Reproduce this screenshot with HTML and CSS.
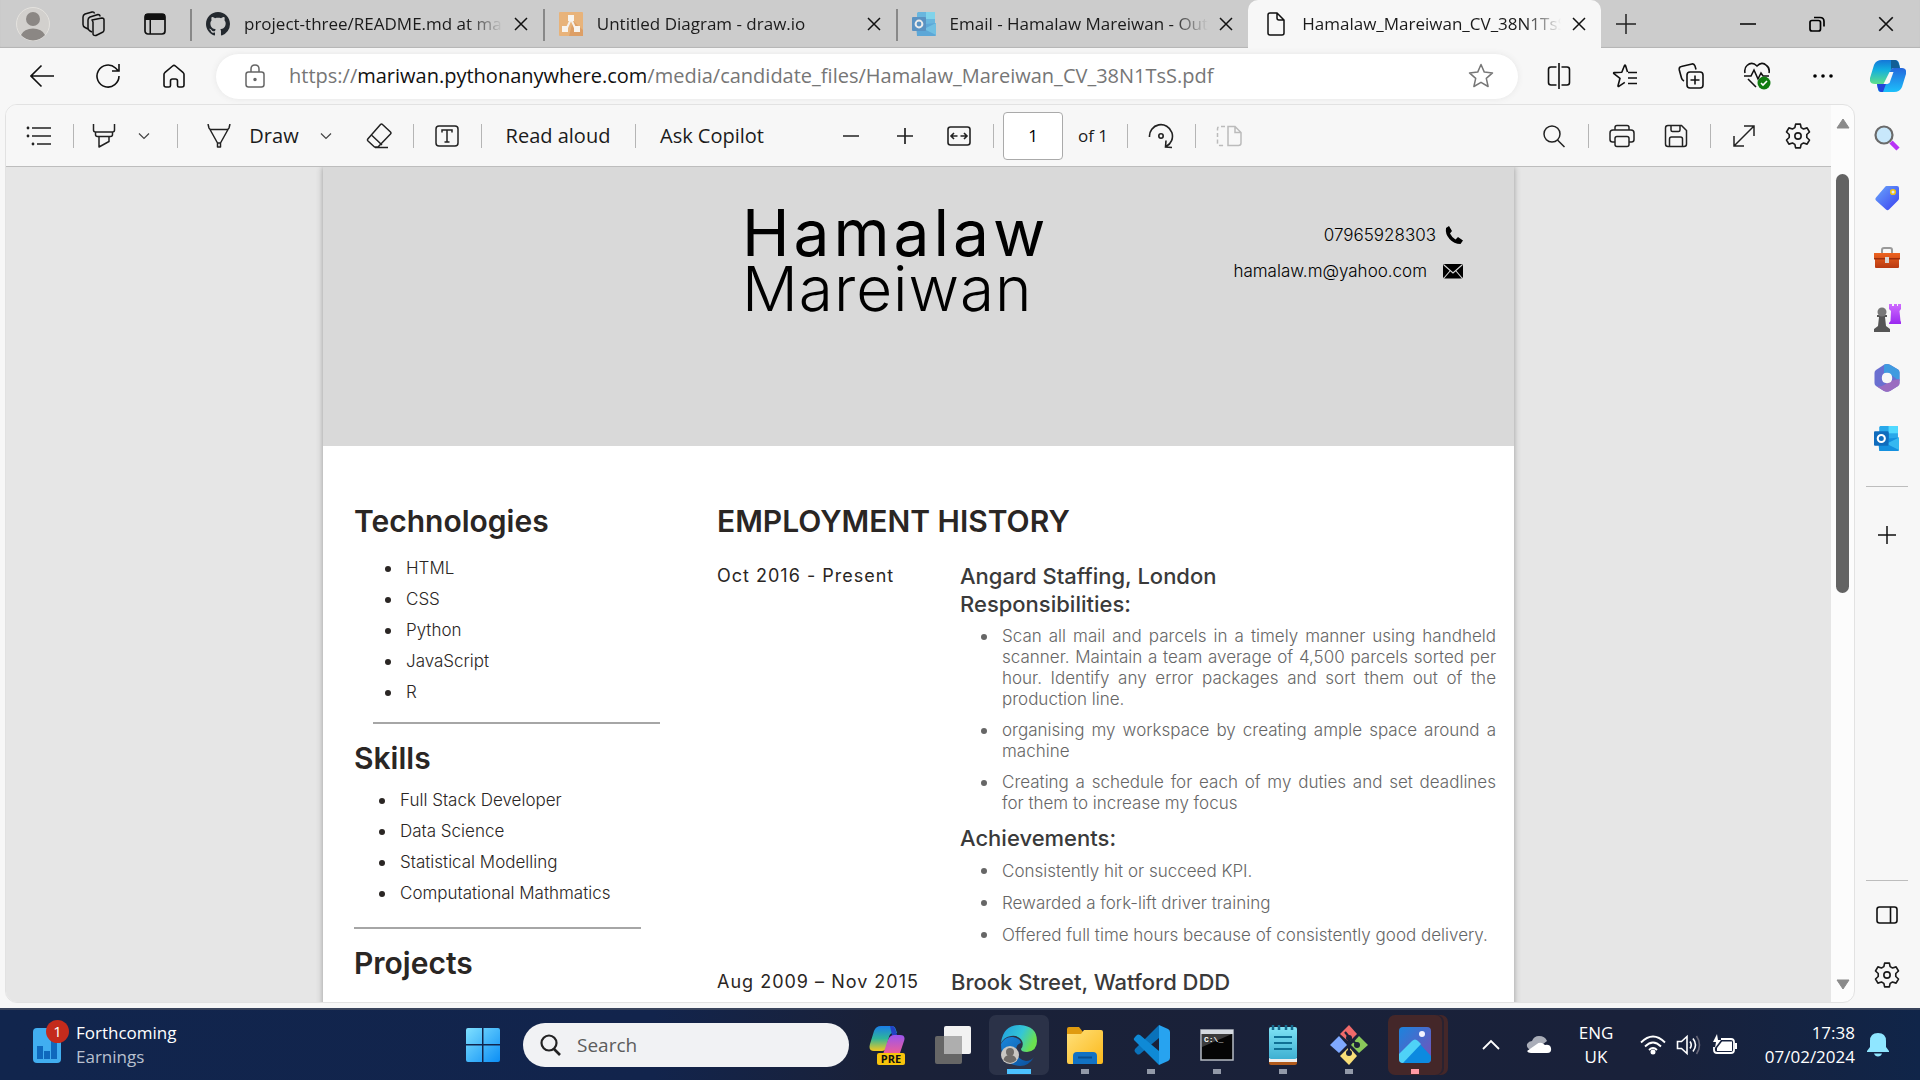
FILE: index.html
```html
<!DOCTYPE html>
<html lang="en">
<head>
<meta charset="utf-8">
<title>Hamalaw_Mareiwan_CV_38N1TsS.pdf</title>
<link rel="stylesheet" href="styles.css">
</head>
<body>
<svg class="defs" aria-hidden="true">
  <defs>
    <linearGradient id="blue" x1="0" y1="0" x2="1" y2="1"><stop offset="0" stop-color="#7fe0ff"/><stop offset="1" stop-color="#0b8ef5"/></linearGradient>
    <linearGradient id="tag" x1="0" y1="0" x2="1" y2="1"><stop offset="0" stop-color="#6aa8fb"/><stop offset="1" stop-color="#3a3ff0"/></linearGradient>
    <linearGradient id="copA" x1="0" y1="0" x2="0" y2="1"><stop offset="0" stop-color="#1576d8"/><stop offset=".4" stop-color="#12aee0"/><stop offset="1" stop-color="#5fe08a"/></linearGradient>
    <linearGradient id="copB" x1="0" y1="0" x2="0" y2="1"><stop offset="0" stop-color="#2567dc"/><stop offset="1" stop-color="#1cc0fb"/></linearGradient>
    <linearGradient id="preA" x1="0" y1="0" x2="0" y2="1"><stop offset="0" stop-color="#1a7de8"/><stop offset=".5" stop-color="#2fb59b"/><stop offset="1" stop-color="#f5c81e"/></linearGradient>
    <linearGradient id="preB" x1="0" y1="0" x2="0" y2="1"><stop offset="0" stop-color="#9a55ee"/><stop offset="1" stop-color="#ff5f86"/></linearGradient>
    <linearGradient id="edgeTop" x1="0" y1="0" x2="1" y2=".4"><stop offset="0" stop-color="#1e9de0"/><stop offset=".6" stop-color="#35c6d6"/><stop offset="1" stop-color="#6be04f"/></linearGradient>
    <linearGradient id="edgeLow" x1="0" y1="0" x2="1" y2="1"><stop offset="0" stop-color="#1a87dc"/><stop offset="1" stop-color="#0b4f9c"/></linearGradient>
    <linearGradient id="folder" x1="0" y1="0" x2="1" y2="1"><stop offset="0" stop-color="#ffe07a"/><stop offset="1" stop-color="#fbb91b"/></linearGradient>
    <linearGradient id="photo" x1="0" y1="0" x2="1" y2="1"><stop offset="0" stop-color="#1b84dd"/><stop offset="1" stop-color="#7a4fb8"/></linearGradient>
    <linearGradient id="rook" x1="0" y1="0" x2="0" y2="1"><stop offset="0" stop-color="#cf6bff"/><stop offset="1" stop-color="#9a28f0"/></linearGradient>
    <linearGradient id="box" x1="0" y1="0" x2="0" y2="1"><stop offset="0" stop-color="#ee6420"/><stop offset="1" stop-color="#b83a12"/></linearGradient>
    <linearGradient id="note" x1="0" y1="0" x2="0" y2="1"><stop offset="0" stop-color="#7fe3f5"/><stop offset="1" stop-color="#3fb0d2"/></linearGradient>
    <symbol id="x" viewBox="0 0 16 16"><path d="M2 2l12 12M14 2L2 14" fill="none" stroke="#111" stroke-width="1.5"/></symbol>
    <symbol id="chev" viewBox="0 0 12 12"><path d="M1 3.5l5 5 5-5" fill="none" stroke="#444" stroke-width="1.2"/></symbol>
    <symbol id="gear" viewBox="0 0 24 24"><g fill="none" stroke="#1b1b1b" stroke-width="1.5" stroke-linejoin="round"><path d="M9.800 1h4.400l.7 3.300 2.200 1.200 3.300-1 2.200 3.800-2.500 2.300v2.800l2.500 2.300-2.200 3.800-3.300-1-2.200 1.200-.7 3.300H9.800l-.7-3.300-2.200-1.200-3.300 1-2.200-3.800 2.500-2.300v-2.800L1.400 8.300l2.200-3.800 3.300 1 2.200-1.200z"/><circle cx="12" cy="12" r="2.900"/></g></symbol>
    <symbol id="outlook" viewBox="0 0 24 24"><path d="M6 0h16a1 1 0 0 1 1 1v13H5V1z" fill="#28a8ea"/><path d="M14 0h9v7h-9z" fill="#50d9ff"/><path d="M5 7h9v7H5z" fill="#0364b8"/><path d="M4 13l20-2v12a1 1 0 0 1-1 1H5z" fill="#1490df"/><path d="M24 11v12l-12-6z" fill="#35b8f1"/><rect x="0" y="5" width="14" height="14" rx="1" fill="#0f6cbd"/><circle cx="7" cy="12" r="3.400" fill="none" stroke="#fff" stroke-width="2"/></symbol>
  </defs>
</svg>

<header class="tabbar">
  <button class="tb-icon" aria-label="Profile"><svg width="34" height="34" viewBox="0 0 34 34"><circle cx="17" cy="17" r="16.500" fill="#d2d0cd" stroke="#e4e2de"/><circle cx="17" cy="12" r="7" fill="#8b8784"/><path d="M5 28a12.500 9 0 0 1 24 0 16 16 0 0 1-24 0z" fill="#8b8784"/></svg></button>
  <button class="tb-icon" aria-label="Workspaces"><svg width="26" height="26" viewBox="0 0 26 26" fill="none" stroke="#111" stroke-width="1.500" stroke-linejoin="round"><path d="M12 9l10-2q2 0 2 2v10q0 1-1 2l-7 3.500q-3 .5-3-2V11z"/><path d="M12 21l-2-1q-2-1-2-3V9q0-2 2-3l8-2.500q2 0 2 2"/><path d="M8 18l-3-1.500q-2-1-2-3V6q0-2 2-3l7-2q2-.5 2.500 1.500"/></svg></button>
  <button class="tb-icon" aria-label="Tab actions"><svg width="22" height="22" viewBox="0 0 22 22"><rect x="1" y="1" width="20" height="20" rx="3" fill="none" stroke="#111" stroke-width="1.700"/><path d="M1 1h20v6H1zM5.500 7h1.500v14H5.500z" fill="#111"/></svg></button>
  <nav class="tabs" aria-label="Open tabs">
    <div class="tab"><svg width="24" height="24" viewBox="0 0 16 16"><path fill="#24292f" d="M8 0C3.580 0 0 3.580 0 8c0 3.540 2.290 6.530 5.470 7.590.4.070.55-.17.55-.38 0-.19-.01-.82-.01-1.490-2.010.37-2.530-.49-2.690-.94-.09-.23-.48-.94-.82-1.130-.28-.15-.68-.52-.01-.53.63-.01 1.080.58 1.230.82.72 1.210 1.870.87 2.330.66.070-.52.28-.87.51-1.070-1.780-.2-3.640-.89-3.640-3.950 0-.87.31-1.590.82-2.150-.08-.2-.36-1.020.08-2.120 0 0 .67-.21 2.200.82.64-.18 1.320-.27 2-.27s1.360.09 2 .27c1.530-1.040 2.200-.82 2.200-.82.44 1.100.16 1.920.08 2.120.51.56.82 1.270.82 2.150 0 3.070-1.870 3.750-3.650 3.950.29.25.54.73.54 1.480 0 1.070-.01 1.930-.01 2.200 0 .21.15.46.55.38A8.010 8.010 0 0 0 16 8c0-4.420-3.580-8-8-8z"/></svg><a class="title" href="#">project-three/README.md at main</a><button class="close" aria-label="Close tab"><svg width="16" height="16"><use href="#x"/></svg></button></div>
    <div class="tab"><svg width="24" height="24" viewBox="0 0 24 24"><rect width="24" height="24" rx="1" fill="#e8b37a"/><path d="M14 9l10 9v6H10z" fill="#dd9f66"/><path d="M12 7L7 18M12 7l5 11" stroke="#f5f0ea" stroke-width="2"/><path d="M9 3h6v6H9zM3 14h6v6H3zM15 14h6v6h-6z" fill="#f8f4ee"/></svg><a class="title" href="#">Untitled Diagram - draw.io</a><button class="close" aria-label="Close tab"><svg width="16" height="16"><use href="#x"/></svg></button></div>
    <div class="tab"><svg class="faded" width="24" height="24"><use href="#outlook"/></svg><a class="title" href="#">Email - Hamalaw Mareiwan - Outlook</a><button class="close" aria-label="Close tab"><svg width="16" height="16"><use href="#x"/></svg></button></div>
    <div class="tab active"><svg width="24" height="24" viewBox="0 0 24 24" fill="none" stroke="#111" stroke-width="1.500"><path d="M6 1h7l7 7v13q0 2-2 2H6q-2 0-2-2V3q0-2 2-2zM13 1v5q0 2 2 2h5"/></svg><a class="title" href="#">Hamalaw_Mareiwan_CV_38N1TsS.pdf</a><button class="close" aria-label="Close tab"><svg width="16" height="16"><use href="#x"/></svg></button></div>
  </nav>
  <button class="newtab" aria-label="New tab"><svg width="22" height="22" viewBox="0 0 22 22"><path d="M11 1v20M1 11h20" stroke="#222" stroke-width="1.500"/></svg></button>
  <div class="winctl">
    <button aria-label="Minimize"><svg width="16" height="16" viewBox="0 0 16 16"><path d="M0 8h16" stroke="#000" stroke-width="1.500"/></svg></button>
    <button aria-label="Restore"><svg width="16" height="16" viewBox="0 0 16 16" fill="none" stroke="#000" stroke-width="1.700"><rect x="1" y="4.500" width="10.500" height="10.500" rx="2"/><path d="M5 1.500h6q4 0 4 4v5"/></svg></button>
    <button aria-label="Close"><svg width="18" height="18"><use href="#x"/></svg></button>
  </div>
</header>

<div class="navbar">
  <button class="nav" aria-label="Back"><svg width="24" height="24" viewBox="0 0 24 24" fill="none" stroke="#111" stroke-width="1.600"><path d="M24 12H1M11.500 1.500L1 12l10.500 10.500"/></svg></button>
  <button class="nav" aria-label="Refresh"><svg width="26" height="26" viewBox="0 0 26 26" fill="none" stroke="#111" stroke-width="1.600"><path d="M24 13A11 11 0 1 1 20.500 5L23 7.500M24 1v7h-7"/></svg></button>
  <button class="nav" aria-label="Home"><svg width="24" height="24" viewBox="0 0 24 24" fill="none" stroke="#111" stroke-width="1.600" stroke-linejoin="round"><path d="M2 10.500q0-1 .8-1.800L10.600 2q1.400-1.200 2.800 0l7.800 6.700q.8.800.8 1.800V21q0 2-2 2h-3q-1.500 0-1.500-1.500V17q0-2-2-2h-3q-2 0-2 2v4.500Q8.500 23 7 23H4q-2 0-2-2z"/></svg></button>
  <div class="address">
    <svg width="22" height="24" viewBox="0 0 22 24" fill="none" stroke="#666" stroke-width="1.500"><rect x="2" y="8" width="18" height="15" rx="2.500"/><path d="M7 8V5q0-4 4-4t4 4v3"/><circle cx="11" cy="15.500" r="1" fill="#666"/></svg>
    <div class="url" role="textbox" contenteditable="true" aria-label="Address">https://<b>mariwan.pythonanywhere.com</b>/media/candidate_files/Hamalaw_Mareiwan_CV_38N1TsS.pdf</div>
    <button class="star" aria-label="Add to favourites"><svg width="26" height="26" viewBox="0 0 26 26" fill="none" stroke="#777" stroke-width="1.500" stroke-linejoin="round"><path d="M13 1.500l3.300 7.600 8.200.8-6.200 5.500 1.800 8.100-7.100-4.200-7.100 4.200 1.800-8.100L1.500 9.900l8.200-.8z"/></svg></button>
  </div>
  <button class="nav" aria-label="Split screen"><svg width="24" height="26" viewBox="0 0 24 26" fill="none" stroke="#111" stroke-width="1.600"><path d="M9.500 4H4Q1.500 4 1.500 6.500v13Q1.500 22 4 22h5.500M14.500 4H20q2.500 0 2.500 2.500v13Q22.500 22 20 22h-5.500M12 0v26"/></svg></button>
  <button class="nav" aria-label="Favourites"><svg width="26" height="26" viewBox="0 0 26 26" fill="none" stroke="#111" stroke-width="1.600" stroke-linejoin="round"><path d="M15.500 9l-2-6.500q-.5-1-1 0L9.800 9.200l-7.600.4q-1 .2-.3 1L8 15.300l-2 7.500q-.1 1 .8.600l6-4M16 9.500h9M16 15h9M16 20.500h9"/></svg></button>
  <button class="nav" aria-label="Collections"><svg width="26" height="26" viewBox="0 0 26 26" fill="none" stroke="#111" stroke-width="1.600"><rect x="9" y="9" width="16" height="16" rx="3"/><path d="M17 12.500v9M12.500 17h9M6 18q-2-1-2.500-3L1.300 7q-.5-3 2-3.500L14 1q2-.5 3 2l1 3.500"/></svg></button>
  <button class="nav" aria-label="Browser essentials"><svg width="28" height="28" viewBox="0 0 28 28" fill="none" stroke="#111" stroke-width="1.600"><path d="M2 11Q1 6 4 3.500 9-1 14 4q5-5 9.500-.5Q27 6 26 11M1 14h7l3-6 4 9 3-6 2 3h6M5 17l8 8"/><circle cx="21" cy="21" r="6.500" fill="#107c10" stroke="none"/><path d="M18 21l2 2 4-4" stroke="#fff"/></svg></button>
  <button class="nav" aria-label="More"><svg width="20" height="6" viewBox="0 0 20 6"><circle cx="2" cy="3" r="1.800"/><circle cx="10" cy="3" r="1.800"/><circle cx="18" cy="3" r="1.800"/></svg></button>
  <button class="nav copilot" aria-label="Copilot"><svg width="36" height="32" viewBox="0 0 36 32"><path d="M12 0h13q3 0 4 3l1 5h-6q-3 0-4 4l-3 9q-1 3-4 3H5q-6 0-5-6L4 5q2-5 8-5z" fill="url(#copA)"/><path d="M24 32H11q-3 0-3-3l-1-5h6q3 0 4-4l3-9q1-3 4-3h8q5 0 4 6l-4 13q-2 5-8 5z" fill="url(#copB)"/><path d="M7 24h6q3 0 4-3l-4 11h-2q-3 0-4-8z" fill="#2345d8"/><path d="M21 0h4q3 0 5 8h-6q-2 0-3 1z" fill="#125f96"/><path d="M19.500 12h4l-4 11-2 1h-4z" fill="#f7f7f7"/></svg></button>
</div>

<div class="workspace">
  <main class="viewer">
    <div class="document">
      <div class="pdfbar">
        <div class="group">
          <button class="tool wide" aria-label="Contents"><svg width="26" height="22" viewBox="0 0 26 22"><path d="M6 3h19M6 11h19M11 19h14" stroke="#222" stroke-width="1.600"/><g fill="#222"><circle cx="2" cy="3" r="1.400"/><circle cx="2" cy="11" r="1.400"/><circle cx="7" cy="19" r="1.400"/></g></svg></button>
          <span class="sep thin"></span>
          <button class="tool mid" aria-label="Highlight"><svg width="24" height="24" viewBox="0 0 24 24" fill="none" stroke="#222" stroke-width="1.500" stroke-linejoin="round"><path d="M1.500 0v6q0 2 2 2h17q2 0 2-2V0M3.500 8v2.500q0 2 2 2h13q2 0 2-2V8M7 12.500V23l10-5.500v-5"/></svg></button>
          <button class="tool small" aria-label="Highlight options"><svg width="12" height="12"><use href="#chev"/></svg></button>
          <span class="sep"></span>
          <button class="tool text"><svg width="24" height="24" viewBox="0 0 24 24" fill="none" stroke="#222" stroke-width="1.500" stroke-linejoin="round"><path d="M1 0l1 4q.5 1.500 2 1.500h16q1.500 0 2-1.500l1-4M3 5.500L10.500 19v4h3v-4L21 5.500M10.500 19h3"/></svg>Draw</button>
          <button class="tool small spaced" aria-label="Draw options"><svg width="12" height="12"><use href="#chev"/></svg></button>
          <button class="tool wide" aria-label="Erase"><svg width="26" height="26" viewBox="0 0 26 26" fill="none" stroke="#222" stroke-width="1.500" stroke-linejoin="round"><path d="M16.500 1.500l8 7.500q1 1 0 2L12 24H8.500l-6.500-6q-1-1 0-2.200L14.500 1.500q1-1 2 0zM6 12.500l10 9.500M9 24.500h13"/></svg></button>
          <span class="sep thin"></span>
          <button class="tool wide" aria-label="Add text"><svg width="24" height="22" viewBox="0 0 24 22" fill="none" stroke="#222" stroke-width="1.500"><rect x="1" y="1" width="22" height="20" rx="3"/><path d="M7 7.500V5h10v2.500M12 5v12M9.500 17h5"/></svg></button>
          <span class="sep thin"></span>
          <button class="tool label">Read aloud</button>
          <span class="sep thin"></span>
          <button class="tool label">Ask Copilot</button>
        </div>
        <div class="group center">
          <button class="tool" aria-label="Zoom out"><svg width="18" height="18" viewBox="0 0 18 18"><path d="M1 9h16" stroke="#222" stroke-width="1.700"/></svg></button>
          <button class="tool" aria-label="Zoom in"><svg width="18" height="18" viewBox="0 0 18 18"><path d="M1 9h16M9 1v16" stroke="#222" stroke-width="1.700"/></svg></button>
          <button class="tool" aria-label="Fit to width"><svg width="24" height="20" viewBox="0 0 24 20" fill="none" stroke="#222" stroke-width="1.600"><rect x="1" y="1" width="22" height="18" rx="2.500"/><path d="M10.500 10H4M7 7l-3 3 3 3M13.500 10H20M17 7l3 3-3 3"/></svg></button>
          <span class="sep tight"></span>
          <input class="pageno" type="text" value="1" aria-label="Page number">
          <span class="of">of 1</span>
          <span class="sep tight"></span>
          <button class="tool" aria-label="Rotate"><svg width="26" height="26" viewBox="0 0 26 26" fill="none" stroke="#222" stroke-width="1.600"><path d="M1.500 14A11.500 11.500 0 1 1 18 23.500M24 24.500l-6.500-.5.500-6.500"/><circle cx="13" cy="13" r="2.200"/></svg></button>
          <span class="sep tight"></span>
          <button class="tool" aria-label="Page view" disabled><svg width="26" height="22" viewBox="0 0 26 22" fill="none" stroke="#bbb" stroke-width="1.500"><path d="M9 1.500H4Q1.500 1.500 1.500 4v14q0 2.500 2.500 2.500h5" stroke-dasharray="4 2.500"/><path d="M12 1.500h7l6 6V18q0 2.500-2.500 2.500H12zM19 1.500v6h6"/></svg></button>
        </div>
        <div class="group end">
          <button class="tool" aria-label="Find"><svg width="22" height="24" viewBox="0 0 22 24" fill="none" stroke="#222" stroke-width="1.500"><circle cx="9" cy="10" r="8"/><path d="M14.500 16l7 7"/></svg></button>
          <span class="sep tight"></span>
          <button class="tool" aria-label="Print"><svg width="26" height="24" viewBox="0 0 26 24" fill="none" stroke="#222" stroke-width="1.500"><path d="M6 6V3.500Q6 1.500 8 1.500h10q2 0 2 2V6M6 18H3.500Q1 18 1 15.500V9q0-3 3-3h18q3 0 3 3v6.500q0 2.500-2.500 2.500H20"/><rect x="6" y="12.500" width="14" height="10" rx="2"/></svg></button>
          <button class="tool" aria-label="Save"><svg width="24" height="24" viewBox="0 0 24 24" fill="none" stroke="#222" stroke-width="1.500"><path d="M4 1.500h13.500l5 5V20q0 2.500-2.500 2.500H4q-2.500 0-2.500-2.500V4Q1.500 1.500 4 1.500zM7 1.500V6q0 1.500 1.500 1.500h6Q16 7.500 16 6V1.500M5.500 22.500V15q0-2 2-2h9q2 0 2 2v7.500"/></svg></button>
          <span class="sep tight"></span>
          <button class="tool" aria-label="Full screen"><svg width="24" height="24" viewBox="0 0 24 24" fill="none" stroke="#222" stroke-width="1.500"><path d="M2 22L22 2M12 2h10v10M2 12v10h10"/></svg></button>
          <button class="tool" aria-label="Settings"><svg width="26" height="26"><use href="#gear"/></svg></button>
        </div>
      </div>
      <div class="canvas">
        <article class="page">
          <header class="cv-head">
            <h1>Hamalaw <span>Mareiwan</span></h1>
            <address>
              <p>07965928303 <svg width="18" height="18" viewBox="0 0 18 18"><path d="M1 2L4 0l3 5-2 2.500q2 4 5.500 6L13 11l5 3.500L15.500 18Q9 18 4.500 13T1 2z"/></svg></p>
              <p class="mail">hamalaw.m@yahoo.com <svg width="20" height="16" viewBox="0 0 20 16"><rect y="1" width="20" height="14.500" rx="2"/><path d="M1 2l9 8 9-8M1 15l6-7M19 15l-6-7" fill="none" stroke="#d9d9d9" stroke-width="1.100"/></svg></p>
            </address>
          </header>
          <div class="cv-body">
            <aside>
              <h2>Technologies</h2>
              <ul class="first">
                <li>HTML</li><li>CSS</li><li>Python</li><li>JavaScript</li><li>R</li>
              </ul>
              <hr class="inset">
              <h2>Skills</h2>
              <ul>
                <li>Full Stack Developer</li><li>Data Science</li><li>Statistical Modelling</li><li>Computational Mathmatics</li>
              </ul>
              <hr>
              <h2>Projects</h2>
              <ul class="projects"><li>Travel Hills</li></ul>
            </aside>
            <section>
              <h2>EMPLOYMENT HISTORY</h2>
              <div class="job">
                <p class="date">Oct 2016 - Present</p>
                <div>
                  <h3>Angard Staffing, London<br>Responsibilities:</h3>
                  <ul class="duties">
                    <li>Scan all mail and parcels in a timely manner using handheld scanner. Maintain a team average of 4,500 parcels sorted per hour. Identify any error packages and sort them out of the production line.</li>
                    <li>organising my workspace by creating ample space around a machine</li>
                    <li>Creating a schedule for each of my duties and set deadlines for them to increase my focus</li>
                  </ul>
                  <h3>Achievements:</h3>
                  <ul class="wins">
                    <li>Consistently hit or succeed KPI.</li>
                    <li>Rewarded a fork-lift driver training</li>
                    <li>Offered full time hours because of consistently good delivery.</li>
                  </ul>
                </div>
              </div>
              <div class="job second">
                <p class="date">Aug 2009 – Nov 2015</p>
                <h3>Brook Street, Watford DDD</h3>
              </div>
            </section>
          </div>
        </article>
      </div>
    </div>
    <div class="scroll">
      <svg width="14" height="11" viewBox="0 0 14 11"><path d="M7 1l6 9H1z" fill="#8a8a8a" stroke="#8a8a8a" stroke-linejoin="round"/></svg>
      <div class="track"><div class="thumb"></div></div>
      <svg width="14" height="11" viewBox="0 0 14 11"><path d="M7 10l6-9H1z" fill="#8a8a8a" stroke="#8a8a8a" stroke-linejoin="round"/></svg>
    </div>
  </main>
  <aside class="sidebar">
    <button aria-label="Search"><svg width="26" height="26" viewBox="0 0 26 26"><path d="M17 17l7 7" stroke="#b833f5" stroke-width="4.500"/><circle cx="10" cy="10" r="8.500" fill="#c8e8fb" stroke="#6a6a6a" stroke-width="2.200"/></svg></button>
    <button aria-label="Shopping"><svg width="26" height="26" viewBox="0 0 26 26"><path d="M12.500 1H23q2 0 2 2v10.500q0 1-1 2l-9 9q-1.500 1.500-3 0L2 15.500q-1.500-1.500 0-3L11 2q.7-1 1.500-1z" fill="url(#tag)"/><circle cx="19" cy="7" r="2.300" fill="#dfe6ff" stroke="#f2c413" stroke-width="1.600"/></svg></button>
    <button aria-label="Tools"><svg width="28" height="24" viewBox="0 0 28 24"><path d="M9 7V4q0-2 2-2h6q2 0 2 2v3" fill="none" stroke="#9a9a9a" stroke-width="2"/><path d="M1 7h26v6H1zM2 13h24v8q0 1-1 1H3q-1 0-1-1z" fill="url(#box)"/><path d="M1 12h26v1.500H1z" fill="#9c2f0c"/><rect x="12" y="11" width="4" height="6" fill="#d8d8d8"/></svg></button>
    <button aria-label="Games"><svg width="28" height="28" viewBox="0 0 28 28"><path d="M16 0h3v2h2V0h3v2h1V0h3v5l-1.500 2 1 10 1.500 2v1H16v-1l1.500-2 .5-10-2-2z" fill="url(#rook)"/><path d="M4 11h10v2h-2l1 9 4 3v3H1v-3l4-3 1-9H4z" fill="#555"/><circle cx="9" cy="8" r="4.500" fill="#777"/></svg></button>
    <button aria-label="Microsoft 365"><svg width="26" height="28" viewBox="0 0 26 28"><path d="M13 0q1.500 0 3 .8l8 4.700q1.500 1 1.500 3V19q0 2-1.500 3l-8 5q-3 1.500-6 0l-8-5Q.5 21 .5 19V9q0-2 1.500-3l8-5.200Q11.500 0 13 0z" fill="#6a6fd0"/><path d="M10 .8Q13-.8 16 .8l8 4.700q1.500 1 1.500 3V17l-8-5.800L13 8.500l-3 1.700z" fill="#3f9be0"/><path d="M25.500 15v4q0 2-1.500 3l-8 5q-3 1.500-6 0l-7-4.500q4 .5 7-1.500l7-4.200z" fill="#9a6cc0"/><path d="M13 8.800q5.200 0 5.200 5.200t-5.200 5.200T7.800 14 13 8.800z" fill="#f7f7f7"/></svg></button>
    <button aria-label="Outlook"><svg width="25" height="25"><use href="#outlook"/></svg></button>
    <hr>
    <button aria-label="Customize"><svg width="18" height="18" viewBox="0 0 18 18"><path d="M0 9h18M9 0v18" stroke="#111" stroke-width="1.500"/></svg></button>
    <hr class="low">
    <button aria-label="Hide sidebar"><svg width="22" height="18" viewBox="0 0 22 18" fill="none" stroke="#111" stroke-width="1.600"><rect x="1" y="1" width="20" height="16" rx="2.500"/><path d="M14.500 1v16"/></svg></button>
    <button aria-label="Settings"><svg width="26" height="26"><use href="#gear"/></svg></button>
  </aside>
</div>

<footer class="taskbar">
  <button class="widget">
    <span class="wicon"><svg width="28" height="35" viewBox="0 0 28 35"><rect width="28" height="35" rx="4" fill="#41aef0"/><path d="M4 18h6v13H4zM11 23h6v8h-6zM18 12h6v19h-6z" fill="#0f69bd"/></svg><i class="badge">1</i></span>
    <span class="wtext">Forthcoming<small>Earnings</small></span>
  </button>
  <div class="apps">
    <button class="app" aria-label="Start"><svg width="36" height="36" viewBox="0 0 36 36" fill="url(#blue)"><path d="M1 3q0-2 2-2h14v16H1zM18.500 1H33q2 0 2 2v14H18.500zM1 18.500h16V35H3q-2 0-2-2zM18.500 18.500H35V33q0 2-2 2H18.500z"/></svg></button>
    <label class="search"><svg width="22" height="22" viewBox="0 0 22 22" fill="none" stroke="#222" stroke-width="2.200"><circle cx="10" cy="9" r="7.500"/><path d="M15 15l6 6" stroke-width="2.600"/></svg><input type="text" placeholder="Search" aria-label="Search"></label>
    <button class="app" aria-label="Copilot preview"><svg width="36" height="40" viewBox="0 0 36 40"><path d="M12 1h11q3 0 4 4l1 3h-4q-3 0-4 4l-3 11q-1 3-4 3H5q-6 0-4-7L5 6q2-5 7-5z" fill="url(#preA)"/><path d="M21 1h2q3 0 5 9h-5z" fill="#2342c4"/><path d="M24 32H13l6-17q2-5 6-5h6q6 0 4 6l-4 12q-2 4-7 4z" fill="url(#preB)"/><rect x="8" y="28" width="28" height="12" rx="2" fill="#f8c40c"/><text x="22" y="38" text-anchor="middle" class="pre">PRE</text></svg></button>
    <button class="app" aria-label="Task view"><svg width="36" height="40" viewBox="0 0 36 40"><rect x="9" y="1" width="27" height="28" rx="2" fill="#f2f2f2"/><rect y="11" width="27" height="28" rx="2" fill="#666"/><path d="M9 11h18v18H9z" fill="#aeaeae"/></svg></button>
    <button class="app current" aria-label="Edge"><svg width="38" height="42" viewBox="0 0 38 42"><path d="M1 19Q3 1 20 1q17 1 17 16 0 10-10 11-6 0-6-3 3-4 1-8-3-6-11-5Q4 13 1 19z" fill="url(#edgeTop)"/><path d="M1 20q4-8 12-7 7 1 8 6-6 2-5 9 2 8 10 9 5 0 8-4-5 9-14 9Q1 41 1 20z" fill="url(#edgeLow)"/><circle cx="10" cy="31" r="9" fill="#c9c6c2"/><circle cx="10" cy="28" r="4" fill="#6f6b68"/><path d="M3.500 36q1-5 6.500-5t6.500 5q-6 6-13 0z" fill="#6f6b68"/></svg></button>
    <button class="app open" aria-label="File Explorer"><svg width="36" height="38" viewBox="0 0 36 38"><path d="M0 3q0-2 2-2h10l4 5h4v6H0z" fill="#e09b10"/><path d="M0 8h14l3-4h17q2 0 2 2v30q0 2-2 2H2q-2 0-2-2z" fill="url(#folder)"/><path d="M6 38V30q0-4 4-4h16q4 0 4 4v8z" fill="#1272c4"/><path d="M11 31.500h14" stroke="#0a4f8f" stroke-width="2"/></svg></button>
    <button class="app open" aria-label="Visual Studio Code"><svg width="38" height="40" viewBox="0 0 38 40"><path d="M27 0L3 24q-1 2 0 3l2 2q1 1 3 0L27 13z" fill="#0a72ba"/><path d="M3 12l2-2q1-1 3 0l19 16v14L2 15q-1-1 1-3z" fill="#0f8ad6"/><path d="M27 0l9 4q2 1 2 3v26q0 2-2 3l-9 4z" fill="#27a3f0"/></svg></button>
    <button class="app open" aria-label="Command Prompt"><svg width="34" height="32" viewBox="0 0 34 32"><rect x="1" y="1" width="32" height="30" fill="#050505" stroke="#b6bcc4" stroke-width="1.500"/><path d="M1 1h32v4H1z" fill="#d5dae0"/><path d="M2 5h30L2 18z" fill="#3c3c3c"/><text x="4" y="13" class="cmd">C:\_</text></svg></button>
    <button class="app open" aria-label="Notepad"><svg width="30" height="40" viewBox="0 0 30 40"><path d="M1 36h28v2q0 2-2 2H3q-2 0-2-2z" fill="#b05a1c"/><path d="M1 33h28v4H1z" fill="#eee"/><rect x="1" y="2" width="28" height="32" rx="2" fill="url(#note)"/><path d="M6 12h18M6 18h18M6 24h18" stroke="#0f6f94" stroke-width="2"/><path d="M5 0v5M11 0v5M18 0v5M24 0v5" stroke="#15698c" stroke-width="2.500"/></svg></button>
    <button class="app open" aria-label="Git"><svg width="38" height="40" viewBox="0 0 38 40"><path d="M19 0l8 9-8 8-9-8z" fill="#f06a6a"/><path d="M9 11l8 9-8 8-9-8z" fill="#7fa9ff"/><path d="M29 11l9 9-9 8-8-8z" fill="#8ac95a"/><path d="M19 22l8 9-8 9-9-9z" fill="#f9df78"/><path d="M15 7l4 5v18M19 13l9 7" fill="none" stroke="#1b2138" stroke-width="2.200"/><circle cx="19" cy="13" r="3" fill="#1b2138"/><circle cx="27" cy="20" r="3" fill="#1b2138"/><circle cx="19" cy="28" r="3" fill="#1b2138"/></svg></button>
    <button class="app photos" aria-label="Photos"><svg width="32" height="36" viewBox="0 0 32 36"><rect width="32" height="36" rx="4" fill="url(#photo)"/><path d="M2 34L16 20l3-5 13 14v3q0 4-4 4H4z" fill="#0c8ae0"/><path d="M0 27L13 14q3-3 6 0l3 3L4 36q-4 0-4-4z" fill="#4fd2f7"/><circle cx="23" cy="7" r="3" fill="#f3f3ff"/></svg></button>
  </div>
  <div class="tray">
    <button aria-label="Hidden icons"><svg width="18" height="12" viewBox="0 0 18 12"><path d="M1 10l8-8 8 8" fill="none" stroke="#fff" stroke-width="1.800"/></svg></button>
    <button class="cloud" aria-label="OneDrive"><svg width="26" height="18" viewBox="0 0 26 18"><path d="M5 14Q0 12 1 8q2-3 5-3 2-5 7-5 6 0 8 5l-9 7z" fill="#a9adb8"/><path d="M5 17q-3 0-4-2l10-7q2-2 5-1l3 2q5-1 6 3 1 5-4 5z" fill="#fff"/></svg></button>
    <button class="lang">ENG<br>UK</button>
    <button class="status" aria-label="Network, volume, battery">
      <svg width="26" height="20" viewBox="0 0 26 20" fill="none" stroke="#fff" stroke-width="1.800"><path d="M1 7.500q12-12 24 0M5 11.500q8-8 16 0M9 15q4-4 8 0"/><circle cx="13" cy="17" r="1.600" fill="#fff"/></svg>
      <svg width="26" height="22" viewBox="0 0 26 22" fill="none" stroke="#fff" stroke-width="1.600"><path d="M1.500 7.500h4L11 2.500v17l-5.500-5h-4zM14 7.500q2.500 3.500 0 7M17 4.500q5 6.500 0 13"/><path d="M20.500 2q6 9 0 18" stroke="#667"/></svg>
      <svg width="26" height="22" viewBox="0 0 26 22"><path d="M9 5h10q3 0 3 3v8q0 3-3 3H5q-3 0-3-3v-3" fill="none" stroke="#fff" stroke-width="1.800"/><path d="M10 7.500h10V17H5v-3zM23 9h2v6h-2zM5 0L1 8h3l-1 6 6-8H6z" fill="#fff"/></svg>
    </button>
    <button class="clock">17:38<br>07/02/2024</button>
    <button class="bell" aria-label="Notifications"><svg width="22" height="24" viewBox="0 0 22 24"><path d="M11 0q8 0 8 8v6l3 4v1H0v-1l3-4V8q0-8 8-8zM7 20.500h8q-1 3-4 3t-4-3z" fill="#8fe6ff"/></svg></button>
  </div>
</footer>
</body>
</html>
```
FILE: styles.css
```css
* { box-sizing: border-box; }
body {
  margin: 0;
  height: 100vh;
  display: flex;
  flex-direction: column;
  overflow: hidden;
  background: #f7f7f7;
  color: #1b1b1b;
  font-family: "Open Sans", "Noto Sans", sans-serif;
}
button {
  display: flex;
  align-items: center;
  justify-content: center;
  padding: 0;
  border: 0;
  background: none;
  color: inherit;
  font: inherit;
}
svg { display: block; flex: none; }
.defs { position: absolute; width: 0; height: 0; }

/* Tab strip */
.tabbar { display: flex; height: 48px; background: #cccccc; padding-left: 4px; box-shadow: inset 0 -1px 1px #b4b4b4; }
.tb-icon { width: 62px; }
.tb-icon:first-child { width: 58px; }
.tabs { display: flex; width: 1411px; min-width: 0; margin-left: 4px; }
.tab {
  flex: 1 1 0;
  min-width: 0;
  display: flex;
  align-items: center;
  gap: 14px;
  padding: 0 12px 0 14px;
  border-left: 2px solid #888;
  border-image: linear-gradient(transparent 20%, #888 20%, #888 84%, transparent 84%) 1;
}
.tab.active { background: #f7f7f7; border: 0; border-radius: 10px 10px 0 0; padding-left: 16px; }
.title {
  flex: 1;
  overflow: hidden;
  white-space: nowrap;
  color: #1b1b1b;
  text-decoration: none;
  font-size: 17px;
  line-height: 24px;
  -webkit-mask-image: linear-gradient(90deg, #000 86%, transparent);
  mask-image: linear-gradient(90deg, #000 86%, transparent);
}
.faded { opacity: .6; }
.close { width: 20px; height: 24px; margin-left: -6px; }
.newtab { width: 50px; }
.winctl { display: flex; margin-left: auto; }
.winctl button { width: 69px; }

/* Address row */
.navbar { display: flex; height: 56px; align-items: center; padding-left: 9px; }
.nav { width: 66px; height: 48px; }
.nav.copilot { width: 64px; }
.address {
  flex: 1;
  min-width: 0;
  display: flex;
  align-items: center;
  height: 45px;
  margin: 0 8px 0 9px;
  padding: 0 24px 0 28px;
  border-radius: 23px;
  background: #fff;
  box-shadow: 0 0 6px #e6e6e6;
}
.url { flex: 1; min-width: 0; margin-left: 23px; overflow: hidden; white-space: nowrap; font-size: 20px; line-height: 30px; color: #767676; outline: 0; }
.url b { font-weight: 400; color: #111; }

/* Work area */
.workspace { flex: 1; min-height: 0; display: flex; }
.viewer {
  flex: 1;
  min-width: 0;
  display: flex;
  margin: 0 0 5px 5px;
  border: 1px solid #e2e2e2;
  border-radius: 12px;
  overflow: hidden;
  background: #fcfcfc;
}
.document { flex: 1; min-width: 0; display: flex; flex-direction: column; }
.pdfbar { display: flex; height: 62px; flex: none; background: #f7f7f7; border-bottom: 1px solid #bdbdbd; }
.group { display: flex; align-items: center; }
.group.center { margin-left: 36px; }
.group.end { margin-left: auto; padding-right: 6px; }
.tool { width: 54px; height: 40px; font-size: 20px; }
.tool.mid { width: 60px; }
.tool.wide { width: 66px; }
.tool.small { width: 20px; }
.tool.spaced { margin: 0 10px; }
.tool.text { width: 106px; gap: 18px; }
.tool.label { width: 152px; }
.sep { width: 46px; height: 24px; background: linear-gradient(#b5b5b5, #b5b5b5) center / 1px 100% no-repeat; }
.sep.thin { width: 2px; }
.sep.tight { width: 14px; }
.pageno { width: 60px; height: 48px; margin: 0 3px; border: 1px solid #aaa; border-radius: 4px; background: #fff; text-align: center; font: inherit; font-size: 17px; }
.of { width: 54px; text-align: center; font-size: 17px; }
.canvas { flex: 1; min-height: 0; overflow: hidden; background: #e6e6e6; }

/* Scroll bar */
.scroll { width: 23px; display: flex; flex-direction: column; align-items: center; padding: 13px 0 12px; }
.track { flex: 1; padding-top: 45px; }
.thumb { width: 13px; height: 52%; border-radius: 7px; background: #636363; }

/* CV page */
.page { max-width: 1191px; margin: 0 auto; background: #fff; color: #2a2624; font-family: Inter, "Open Sans", sans-serif; box-shadow: 0 0 6px #999; }
.page h1, .page h2, .page h3, .page p, .page ul { margin: 0; padding: 0; }
.cv-head { height: 279px; display: flex; justify-content: space-between; padding: 38px 51px 0 419px; background: #d9d9d9; color: #000; }
h1 { font-size: 64px; line-height: 56px; font-weight: 400; letter-spacing: 4px; }
h1 span { display: block; font-size: 62px; font-weight: 300; letter-spacing: 1px; }
address { padding-top: 12px; font-style: normal; font-size: 17px; line-height: 36px; font-weight: 300; }
address p { display: flex; align-items: center; justify-content: flex-end; gap: 9px; }
address .mail { gap: 16px; }
.cv-body { display: grid; grid-template-columns: 363px 1fr; padding: 53px 18px 0 31px; }
h2 { font-size: 30px; line-height: 44px; font-weight: 600; }
.page ul { list-style: none; }
.page li { display: flex; }
.page li::before { content: ""; flex: none; width: 6px; height: 6px; margin: 13px 15px 0 0; border-radius: 50%; background: currentColor; }
aside li { font-size: 17px; line-height: 31px; font-weight: 300; }
.page aside ul { padding: 5px 0 18px 25px; }
.page aside ul.first { padding: 10px 0 14px 31px; }
.page aside ul.projects { padding-top: 10px; }
.cv-body hr { width: 287px; height: 2px; margin: 0 0 12px; border: 0; background: #a6a6a6; }
.cv-body hr.inset { margin-left: 19px; }
.job { display: grid; grid-template-columns: 243px 1fr; padding-top: 19px; }
.date { font-size: 18px; line-height: 28px; letter-spacing: 1px; }
h3 { font-size: 22px; line-height: 28px; font-weight: 500; color: #3a3a3a; }
.page .duties { padding: 8px 0 0 21px; }
.duties li { margin-bottom: 10px; font-size: 17px; line-height: 21px; font-weight: 300; color: #666; text-align: justify; }
.page .duties li::before { margin-top: 8px; }
.page .wins { padding: 3px 0 0 21px; }
.wins li { font-size: 17px; line-height: 32px; font-weight: 300; color: #666; }
.job.second { grid-template-columns: 234px 1fr; padding-top: 17px; }

/* Edge side bar */
.sidebar { width: 65px; display: flex; flex-direction: column; align-items: center; padding: 4px 2px 3px 0; }
.sidebar button { width: 60px; height: 60px; flex: none; }
.sidebar hr { width: 42px; height: 1px; margin: 18px 0; border: 0; background: #bdbdbd; }
.sidebar hr.low { margin: auto 0 4px; }

/* Task bar */
.taskbar {
  flex: none;
  display: flex;
  align-items: center;
  height: 72px;
  border-top: 2px solid #39445c;
  background: linear-gradient(90deg, #11254d 0%, #12244c 34%, #1a2138 46%, #19213a 86%, #102549 100%);
  color: #fff;
  font-size: 17px;
  line-height: 24px;
}
.widget { margin-left: 33px; gap: 15px; text-align: left; }
.wicon { position: relative; }
.badge { position: absolute; top: -8px; left: 13px; width: 23px; height: 23px; border-radius: 50%; background: #c42b1c; font-size: 15px; line-height: 23px; font-style: normal; text-align: center; }
.wtext small { display: block; font-size: inherit; color: #b9c0cf; }
.apps { display: flex; align-items: center; margin-left: auto; }
.app { width: 60px; height: 60px; margin: 0 3px; border-radius: 7px; }
.current { background: linear-gradient(#4cc2ff, #4cc2ff) center bottom 1px / 24px 5px no-repeat #2b3248; }
.open { background: linear-gradient(#9299a8, #9299a8) center bottom 1px / 8px 5px no-repeat; }
.photos { width: 54px; margin: 0 6px; background: linear-gradient(#ff99a4, #ff99a4) center bottom 1px / 8px 5px no-repeat #442729; box-shadow: 2px 0 0 #2a2230, 6px 0 0 #442729; }
.search { display: flex; align-items: center; width: 326px; height: 44px; margin: 0 5px 0 7px; padding: 0 16px; gap: 14px; border-radius: 22px; background: #f1f2f4; }
.search input { flex: 1; min-width: 0; border: 0; background: none; font: inherit; font-size: 19px; outline: 0; }
.search input::placeholder { color: #5c5c5c; opacity: 1; }
.pre { font: 700 11px "Open Sans", sans-serif; fill: #111; }
.cmd { font: 700 8px "Liberation Mono", monospace; fill: #fff; }
.tray { display: flex; align-items: center; margin-left: 25px; }
.tray button { height: 60px; }
.tray > button:first-child { width: 36px; }
.cloud { width: 60px; }
.lang { width: 54px; text-align: center; }
.status { width: 118px; gap: 10px; padding-left: 14px; }
.clock { width: 114px; justify-content: flex-end; text-align: right; }
.bell { width: 46px; margin-right: 19px; }
```
